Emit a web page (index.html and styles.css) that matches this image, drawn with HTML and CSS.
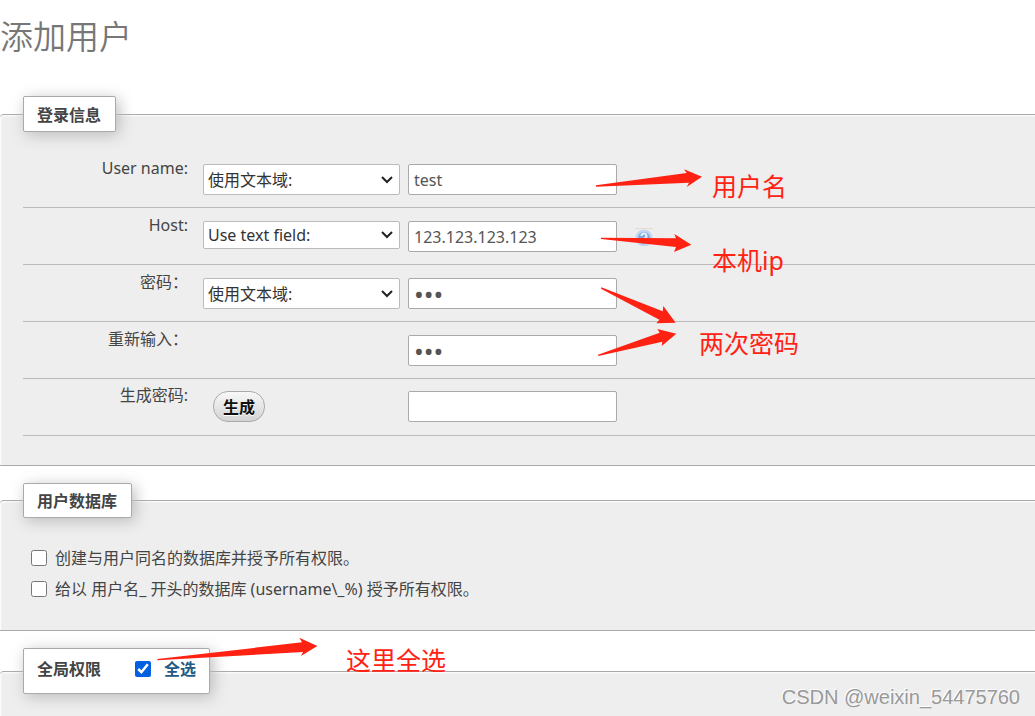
FILE: index.html
```html
<!DOCTYPE html>
<html lang="zh-CN">
  <head>
    <meta charset="UTF-8" />
    <meta name="viewport" content="width=device-width, initial-scale=1.0" />
    <title>添加用户</title>
    <link rel="stylesheet" href="styles.css">
  </head>
  <body>
    <h2 class="page-title">添加用户</h2>

    <form class="user-form">
      <!-- LOGIN INFORMATION -->
      <fieldset class="panel">
        <legend>登录信息</legend>
        <div class="item">
          <label class="item-label" for="username">User name:</label>
          <select class="field" aria-label="User name type">
            <option>使用文本域:</option>
          </select>
          <input class="field" type="text" id="username" value="test" />
        </div>
        <div class="item">
          <label class="item-label" for="hostname">Host:</label>
          <select class="field field-short" aria-label="Host type">
            <option>Use text field:</option>
          </select>
          <input class="field" type="text" id="hostname" value="123.123.123.123" />
          <svg class="help" viewBox="0 0 18 18" aria-hidden="true">
            <path d="M0 .5h18" stroke="#e6dccb" />
            <circle cx="9" cy="10" r="8.500" fill="#c0d6f1" />
            <circle cx="9" cy="10" r="6" fill="#7fa9df" />
            <path d="M6.500 8a2.500 2.500 0 1 1 3.600 2.200c-.8.4-1.100.8-1.100 1.600M9 13v1" fill="none" stroke="#e8f1fb" stroke-width="2" />
          </svg>
        </div>
        <div class="item">
          <label class="item-label" for="password">密码：</label>
          <select class="field" aria-label="密码类型">
            <option>使用文本域:</option>
          </select>
          <input class="field" type="password" id="password" value="123" />
        </div>
        <div class="item">
          <label class="item-label" for="retype">重新输入：</label>
          <input class="field" type="password" id="retype" value="123" />
        </div>
        <div class="item item-generate">
          <label class="item-label" for="generated">生成密码:</label>
          <div class="button-cell"><button type="button" class="generate">生成</button></div>
          <input class="field" type="text" id="generated" />
        </div>
      </fieldset>

      <!-- USER DATABASE -->
      <fieldset class="panel panel-database">
        <legend>用户数据库</legend>
        <div class="check-row">
          <input type="checkbox" id="createDb" />
          <label for="createDb">创建与用户同名的数据库并授予所有权限。</label>
        </div>
        <div class="check-row">
          <input type="checkbox" id="grantDb" />
          <label for="grantDb">给以 用户名_ 开头的数据库 (username\_%) 授予所有权限。</label>
        </div>
      </fieldset>

      <!-- GLOBAL PRIVILEGES -->
      <fieldset class="panel panel-global">
        <legend>
          <span class="legend-row">
            全局权限
            <input type="checkbox" id="checkAll" checked />
            <label class="check-all" for="checkAll">全选</label>
          </span>
        </legend>
      </fieldset>
    </form>

    <!-- ANNOTATIONS -->
    <svg class="arrows arrows-login" viewBox="0 0 690 660" aria-hidden="true">
      <path d="M18 106L290 69L282 58L336 80L290 111L297 98L18 110Z" />
      <path d="M33 263L258 265L253 252L304 284L252 306L258 291L33 267Z" />
      <path d="M34 412L218 484L220 468L257 518L199 520L208 509L33 416Z" />
      <path d="M24 614L209 548L202 537L259 551L215 588L217 575L25 618Z" />
    </svg>
    <svg class="arrows arrows-global" viewBox="0 0 510 75" aria-hidden="true">
      <path d="M22 66L456 16L448 2L502 27L453 57L459 45L22 70Z" />
    </svg>
    <span class="note note-user">用户名</span>
    <span class="note note-host">本机ip</span>
    <span class="note note-password">两次密码</span>
    <span class="note note-all">这里全选</span>
    <span class="watermark">CSDN @weixin_54475760</span>
  </body>
</html>
```

FILE: styles.css
```css
/* Global Styles */
* {
  box-sizing: border-box;
}
body {
  position: relative;
  display: flex;
  flex-direction: column;
  min-height: 100vh;
  margin: 0;
  background: #fff;
  color: #444;
  font-family: "Noto Sans", "Noto Sans CJK SC", sans-serif;
  font-size: 16px;
  line-height: 20px;
}
.page-title {
  margin: 0;
  padding: 11px 0 37px;
  color: #777;
  font-family: "Noto Sans CJK SC", sans-serif;
  font-size: 33px;
  font-weight: 350;
  line-height: 48px;
}
.user-form {
  flex: 1;
  display: flex;
  flex-direction: column;
  gap: 17px;
}

/* PANELS */
.panel {
  min-width: 0;
  margin: 0;
  padding: 19px 0 29px 23px;
  border: solid #aaa;
  border-width: 1px 0;
  border-radius: 4px 0 0 0;
  background: #eee;
  box-shadow: 1px 1px 2px #fff inset;
}
.panel legend {
  padding: 8px 14px 6px 13px;
  border: 1px solid #aaa;
  border-radius: 2px;
  background: #fff;
  box-shadow: 3px 3px 15px #bbb;
  font-weight: bold;
}
.panel-database {
  padding: 24px 0 26px 31px;
}
.panel-database legend {
  margin-left: -8px;
  padding: 7px 14px 6px 13px;
}
.panel-global {
  flex: 1;
  padding-top: 0;
  padding-bottom: 0;
  border-bottom: none;
}
.panel-global legend {
  padding: 10px 13px 14px;
}

/* FORM ROWS */
.item {
  display: flex;
  align-items: flex-start;
  gap: 8px;
  min-height: 57px;
  padding: 13px 0 12px;
  border-bottom: 1px solid #bbb;
}
.item-generate {
  padding: 12px 0 13px;
}
.item-label {
  width: 165px;
  margin: -6px 7px 0 0;
  text-align: right;
}
.field {
  height: 31px;
  border: 1px solid #aaa;
  border-radius: 2px;
  background: #fff;
  color: #555;
  font: inherit;
}
input.field {
  width: 209px;
  padding: 5px;
}
input[type="password"] {
  font-size: 26px;
}
select.field {
  appearance: none;
  width: 197px;
  padding: 0 24px 0 4px;
  border-color: #bbb;
  background: #fff url("data:image/svg+xml,%3Csvg xmlns='http://www.w3.org/2000/svg' width='12' height='8'%3E%3Cpath d='M1 1l5 5 5-5' fill='none' stroke='%23222' stroke-width='2'/%3E%3C/svg%3E") no-repeat right 6px center;
  color: #333;
}
select.field-short {
  height: 28px;
}
/* rows without a select keep the text box in its column */
.item-label + input.field {
  margin-left: 205px;
}
.button-cell {
  width: 197px;
  padding-left: 10px;
}
.generate {
  height: 31px;
  padding: 0 9px;
  border: 1px solid #aaa;
  border-radius: 15px;
  background: linear-gradient(#f8f8f8, #d4d4d4);
  color: #111;
  font: inherit;
  font-weight: bold;
  text-shadow: 0 1px 0 #fff;
}
.help {
  width: 18px;
  height: 18px;
  margin: 7px 0 0 10px;
}

/* CHECKBOXES */
input[type="checkbox"] {
  width: 16px;
  height: 16px;
  margin: 0;
  accent-color: #0060df;
}
.check-row {
  display: flex;
  align-items: center;
  gap: 8px;
  min-height: 31px;
}
.legend-row {
  display: flex;
  align-items: center;
}
.legend-row input {
  margin: 0 13px 0 34px;
}
.check-all {
  color: #235a81;
}

/* ANNOTATIONS */
.arrows {
  position: absolute;
  fill: #ff2213;
  pointer-events: none;
}
.arrows-login {
  left: 590px;
  top: 150px;
  width: 230px;
}
.arrows-global {
  left: 150px;
  top: 637px;
  width: 170px;
}
.note {
  position: absolute;
  color: #ff2213;
  font-size: 25px;
  line-height: 32px;
}
.note-user {
  left: 712px;
  top: 170px;
}
.note-host {
  left: 712px;
  top: 244px;
}
.note-password {
  left: 699px;
  top: 327px;
}
.note-all {
  left: 346px;
  top: 644px;
}
.watermark {
  position: absolute;
  right: 15px;
  bottom: 9px;
  color: #999;
  font-family: "Liberation Sans", sans-serif;
  font-size: 20px;
  text-shadow: -1px -1px 0 #fff;
}
```
